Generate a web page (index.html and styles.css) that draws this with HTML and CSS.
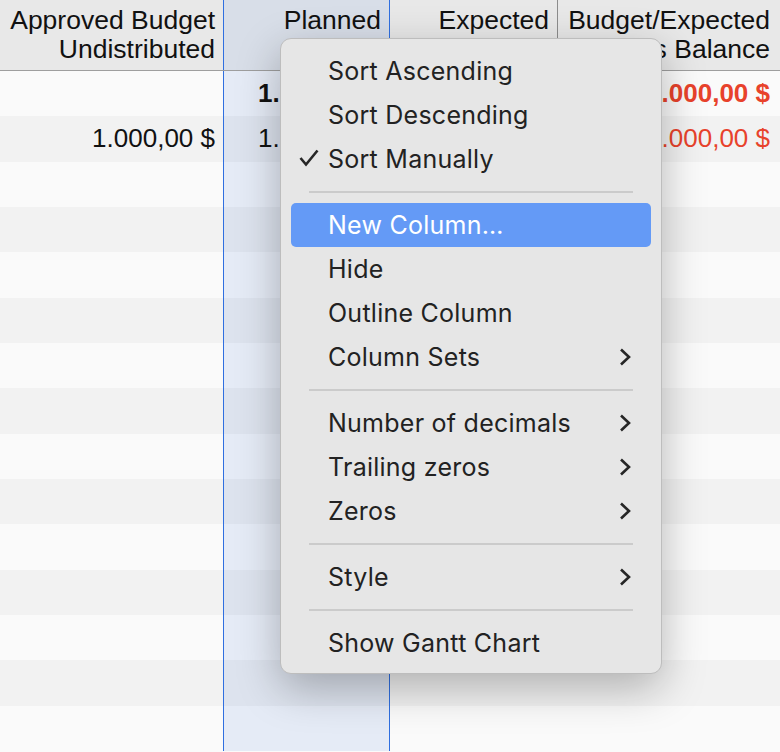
FILE: index.html
```html
<!DOCTYPE html>
<html lang="en">
<head>
  <meta charset="UTF-8">
  <title>Budget Columns</title>
  <link rel="stylesheet" href="styles.css">
</head>
<body>
<div class="sheet">
  <div class="head">
    <div class="hcell">Approved Budget<br>Undistributed</div>
    <div class="hcell sel">Planned</div>
    <div class="hcell">Expected</div>
    <div class="hcell">Budget/Expected<br>Costs Balance</div>
  </div>

  <div class="rows">
    <div class="row">
      <div class="cell"></div>
      <div class="cell sel bold">1.000,00 $</div>
      <div class="cell"></div>
      <div class="cell neg bold">-1.000,00 $</div>
    </div>
    <div class="row">
      <div class="cell">1.000,00 $</div>
      <div class="cell sel">1.000,00 $</div>
      <div class="cell"></div>
      <div class="cell neg">-1.000,00 $</div>
    </div>
    <div class="row"><div class="cell"></div><div class="cell sel"></div><div class="cell"></div><div class="cell"></div></div>
    <div class="row"><div class="cell"></div><div class="cell sel"></div><div class="cell"></div><div class="cell"></div></div>
    <div class="row"><div class="cell"></div><div class="cell sel"></div><div class="cell"></div><div class="cell"></div></div>
    <div class="row"><div class="cell"></div><div class="cell sel"></div><div class="cell"></div><div class="cell"></div></div>
    <div class="row"><div class="cell"></div><div class="cell sel"></div><div class="cell"></div><div class="cell"></div></div>
    <div class="row"><div class="cell"></div><div class="cell sel"></div><div class="cell"></div><div class="cell"></div></div>
    <div class="row"><div class="cell"></div><div class="cell sel"></div><div class="cell"></div><div class="cell"></div></div>
    <div class="row"><div class="cell"></div><div class="cell sel"></div><div class="cell"></div><div class="cell"></div></div>
    <div class="row"><div class="cell"></div><div class="cell sel"></div><div class="cell"></div><div class="cell"></div></div>
    <div class="row"><div class="cell"></div><div class="cell sel"></div><div class="cell"></div><div class="cell"></div></div>
    <div class="row"><div class="cell"></div><div class="cell sel"></div><div class="cell"></div><div class="cell"></div></div>
    <div class="row"><div class="cell"></div><div class="cell sel"></div><div class="cell"></div><div class="cell"></div></div>
    <div class="row"><div class="cell"></div><div class="cell sel"></div><div class="cell"></div><div class="cell"></div></div>
  </div>

  <div class="menu">
    <div class="item">Sort Ascending</div>
    <div class="item">Sort Descending</div>
    <div class="item">
      <svg class="check" width="20" height="18" viewBox="0 0 20 18"><path d="M1.5 9 L7 15.5 L18.5 1.5" fill="none" stroke="#262626" stroke-width="2.6"/></svg>
      Sort Manually
    </div>
    <div class="sep"></div>
    <div class="item active">New Column…</div>
    <div class="item">Hide</div>
    <div class="item">Outline Column</div>
    <div class="item sub">Column Sets
      <svg class="chev" width="12" height="18" viewBox="0 0 12 18"><path d="M2 1.5 L10 9 L2 16.5" fill="none" stroke="#262626" stroke-width="2.6"/></svg>
    </div>
    <div class="sep"></div>
    <div class="item sub">Number of decimals
      <svg class="chev" width="12" height="18" viewBox="0 0 12 18"><path d="M2 1.5 L10 9 L2 16.5" fill="none" stroke="#262626" stroke-width="2.6"/></svg>
    </div>
    <div class="item sub">Trailing zeros
      <svg class="chev" width="12" height="18" viewBox="0 0 12 18"><path d="M2 1.5 L10 9 L2 16.5" fill="none" stroke="#262626" stroke-width="2.6"/></svg>
    </div>
    <div class="item sub">Zeros
      <svg class="chev" width="12" height="18" viewBox="0 0 12 18"><path d="M2 1.5 L10 9 L2 16.5" fill="none" stroke="#262626" stroke-width="2.6"/></svg>
    </div>
    <div class="sep"></div>
    <div class="item sub">Style
      <svg class="chev" width="12" height="18" viewBox="0 0 12 18"><path d="M2 1.5 L10 9 L2 16.5" fill="none" stroke="#262626" stroke-width="2.6"/></svg>
    </div>
    <div class="sep"></div>
    <div class="item">Show Gantt Chart</div>
  </div>
</div>
</body>
</html>
```

FILE: styles.css
```css
body {
  margin: 0;
  font-family: "Liberation Sans", Arial, sans-serif;
  background-color: #fafafa;
  overflow: hidden;
}

.sheet {
  position: relative;
  width: 780px;
  height: 752px;
  overflow: hidden;
}

.head,
.row {
  display: grid;
  grid-template-columns: 223px 167px 168px 222px;
}

.head {
  height: 70px;
  background-color: #e8e8e8;
  border-bottom: 1px solid #9e9e9e;
}

.hcell {
  padding: 6px 8px 0 0;
  text-align: right;
  font-size: 26.5px;
  line-height: 29px;
  color: #111;
  border-right: 1px solid #8c8c8c;
  white-space: nowrap;
  overflow: hidden;
}

.hcell:first-child {
  border-right: none;
}

.hcell:last-child {
  border-right: none;
  padding-right: 10px;
}

.hcell.sel {
  background-color: #d8dee8;
  border-left: 1px solid #2f6fe0;
  border-right: 1px solid #2f6fe0;
}

.row {
  height: 45.33px;
}

.row:nth-child(odd) {
  background-color: #fafafa;
}

.row:nth-child(even) {
  background-color: #f2f2f2;
}

.cell {
  padding-right: 8px;
  text-align: right;
  font-size: 26px;
  line-height: 45px;
  color: #111;
  white-space: nowrap;
}

.cell:last-child {
  padding-right: 10px;
}

.cell.sel {
  background-color: #e5ebf6;
  border-left: 1px solid #2f6fe0;
  border-right: 1px solid #2f6fe0;
}

.row:nth-child(even) .cell.sel {
  background-color: #dde3ee;
}

.bold {
  font-weight: bold;
}

.neg {
  color: #e8422b;
}

/* context menu */
.menu {
  position: absolute;
  left: 280px;
  top: 38px;
  width: 380px;
  padding: 10px 0 8px;
  background-color: #e6e6e6;
  border: 1px solid #bdbdbd;
  border-radius: 11px;
  box-shadow: 0 14px 44px rgba(0, 0, 0, 0.28);
  font-family: Inter, "Noto Sans", sans-serif;
  color: #222;
}

.item {
  position: relative;
  display: flex;
  align-items: center;
  justify-content: space-between;
  height: 44px;
  margin: 0 10px;
  padding: 0 20px 0 37px;
  border-radius: 5px;
  font-size: 25px;
  letter-spacing: 0.25px;
}

.item.active {
  background-color: #649af6;
  color: #fff;
}

.check {
  position: absolute;
  left: 8px;
  top: 12px;
}

.chev {
  display: block;
}

.sep {
  height: 2px;
  margin: 10px 28px;
  background-color: #cbcbcb;
}
```
